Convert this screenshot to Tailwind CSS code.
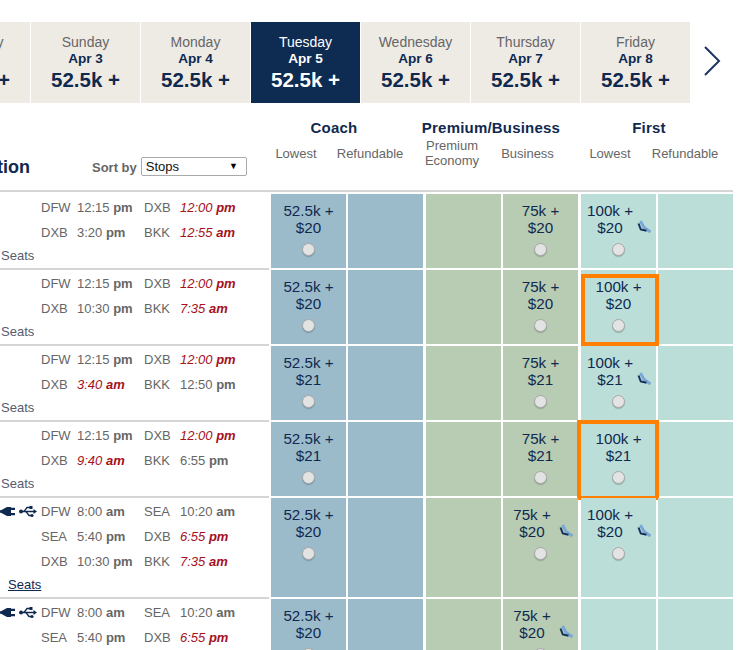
<!DOCTYPE html>
<html lang="en">
<head>
  <meta charset="UTF-8" />
  <title>Award Calendar</title>
  <script src="https://cdn.jsdelivr.net/npm/@tailwindcss/browser@4"></script>
</head>
<body class="bg-white overflow-hidden h-[650px] font-['Liberation_Sans',Arial,sans-serif] text-[#10294f]">

  <!-- date tabs -->
  <div class="flex items-start pt-[22px] ml-[-79px] gap-px" id="tabs"></div>

  <!-- column headers -->
  <div class="flex w-[733px] h-[89px] border-b-2 border-[#d5d5d5]">
    <div class="w-[271px] shrink-0 flex items-start">
      <span class="text-[18px] font-bold ml-[-4px] mt-[51px] w-[34px] shrink-0 overflow-hidden flex justify-end">tion</span>
      <span class="text-[13px] font-bold text-[#666] ml-[62px] mt-[55px] whitespace-nowrap">Sort by</span>
      <div class="ml-[4px] mt-[54px] w-[106px] shrink-0 h-[19px] border border-[#aaa] rounded-[2px] flex items-center justify-between pl-[4px] pr-[8px] text-[13px] text-[#111]">
        <span>Stops</span><span class="text-[9px] text-black">▼</span>
      </div>
    </div>
    <div class="flex-1 pt-[16px]">
      <div class="flex text-[15px] font-bold leading-[17px] text-center tracking-[0.2px]">
        <span class="w-[126px]">Coach</span>
        <span class="w-[188px]">Premium/Business</span>
        <span class="w-[128px]">First</span>
      </div>
      <div class="flex items-center h-[30px] mt-[2px] text-[13px] leading-[15px] text-[#666] text-center">
        <span class="w-[50px]">Lowest</span>
        <span class="w-[98px]">Refundable</span>
        <span class="w-[66px]">Premium Economy</span>
        <span class="w-[85px]">Business</span>
        <span class="w-[80px]">Lowest</span>
        <span class="w-[70px]">Refundable</span>
      </div>
    </div>
  </div>

  <!-- fare rows -->
  <div class="mt-[2px]" id="rows"></div>

  <script>
    const tabs = [
      ['Saturday', 'Apr 2'], ['Sunday', 'Apr 3'], ['Monday', 'Apr 4'], ['Tuesday', 'Apr 5'],
      ['Wednesday', 'Apr 6'], ['Thursday', 'Apr 7'], ['Friday', 'Apr 8']
    ]
    const seatIcon = `<svg class="absolute right-[4px] top-[26px]" width="15" height="14" viewBox="0 0 15 14"><path d="M3.5 1 L7 7.5 L13.5 12" fill="none" stroke="#7aa8d6" stroke-width="3"/><path d="M1.5 3.5 L3.8 9.5 L9.5 10.8" fill="none" stroke="#16305a" stroke-width="2"/></svg>`
    const plugIcons = `<svg class="absolute left-0 top-[6px]" width="37" height="13" viewBox="0 0 37 13"><path d="M0 5.2 H1 L7 2 H11 V11 H7 L1 7.8 H0 Z M11 2.8 H15 V5 H11 Z M11 8 H15 V10.2 H11 Z" fill="#10294f"/><path d="M20 6.5 H35" stroke="#10294f" stroke-width="1.5"/><circle cx="21" cy="6.5" r="2" fill="#10294f"/><path d="M33.5 4 L37 6.5 L33.5 9 Z" fill="#10294f"/><path d="M24 6.5 L27 2.5 H30 M26 6.5 L29 10.5 H31" stroke="#10294f" stroke-width="1.3" fill="none"/><rect x="29.5" y="1" width="3" height="3" fill="#10294f"/><circle cx="32" cy="10.5" r="1.6" fill="#10294f"/></svg>`

    const tabHtml = tabs.map(([day, date], i) => {
      const on = i === 3
      return `<div class="w-[109px] h-[81px] shrink-0 text-center pt-[12px] ${on ? 'bg-[#0e2b52] text-white' : 'bg-[#eeebe5] text-[#10294f]'}">
        <div class="text-[14px] leading-[17px] ${on ? 'text-white' : 'text-[#666]'}">${day}</div>
        <div class="text-[13.6px] leading-[16px] font-bold">${date}</div>
        <div class="text-[20.5px] leading-[25px] font-bold">52.5k +</div>
      </div>`
    }).join('')
    document.getElementById('tabs').innerHTML = tabHtml + `<svg class="ml-[13px] mt-[24px] shrink-0" width="17" height="30" viewBox="0 0 17 30"><path d="M1 1 L15 15 L1 29" fill="none" stroke="#1c3560" stroke-width="2"/></svg>`

    const t = (s, red) => {
      const [num, ap] = s.split(' ')
      return red
        ? `<span class="italic text-[#a5101c]">${num} <b>${ap}</b></span>`
        : `<span>${num} <b>${ap}</b></span>`
    }
    const A = ['DFW', '12:15 pm', 0, 'DXB', '12:00 pm', 1]
    const B = ['DFW', '8:00 am', 0, 'SEA', '10:20 am', 0]
    const C = ['SEA', '5:40 pm', 0, 'DXB', '6:55 pm', 1]
    const D = ['DXB', '10:30 pm', 0, 'BKK', '7:35 am', 1]

    const rows = [
      { h: 74, legs: [A, ['DXB', '3:20 pm', 0, 'BKK', '12:55 am', 1]], fee: '$20', fSeat: 1, box: 0 },
      { h: 74, legs: [A, D], fee: '$20', box: 1 },
      { h: 74, legs: [A, ['DXB', '3:40 am', 1, 'BKK', '12:50 pm', 0]], fee: '$21', fSeat: 1, box: 0 },
      { h: 74, legs: [A, ['DXB', '9:40 am', 1, 'BKK', '6:55 pm', 0]], fee: '$21', box: 2 },
      { h: 99, legs: [B, C, D], fee: '$20', bSeat: 1, fSeat: 1, link: 1, icons: 1 },
      { h: 99, legs: [B, C, D], fee: '$20', bSeat: 1, noFirst: 1, icons: 1 },
    ]

    const fare = (pts, fee, seat) => `<div class="relative pt-[8px] text-[15.2px] leading-[17px] text-center">
        <div class="${seat ? 'pr-[17px]' : ''}"><div>${pts} +</div><div>${fee}</div></div>
        <div class="mx-auto mt-[7px] w-[13px] h-[13px] rounded-full bg-[#e3e3e3] border border-[#a8a8a8] shadow-[0_1px_1px_rgba(0,0,0,0.2)]"></div>
        ${seat ? seatIcon : ''}
      </div>`

    document.getElementById('rows').innerHTML = rows.map((r, i) => {
      const legs = r.legs.map((l, j) => `<div class="grid grid-cols-[41px_36px_67px_36px_1fr] text-[13px] leading-[25px] text-[#666] whitespace-nowrap">
          <div class="relative">${j === 0 && r.icons ? plugIcons : ''}</div>
          <span>${l[0]}</span>${t(l[1], l[2])}<span>${l[3]}</span>${t(l[4], l[5])}
        </div>`).join('')
      const seats = r.link
        ? `<a class="block pl-[8px] mt-px text-[13px] leading-[20px] underline text-[#10294f]">Seats</a>`
        : `<div class="pl-[1px] mt-px text-[13px] leading-[20px] text-[#555c70]">Seats</div>`
      const boxClass = r.box === 1
        ? 'absolute left-[581px] top-[4px] w-[78px] h-[72px] border-4 border-[#ff8000]'
        : 'absolute left-[577px] top-[-2px] w-[82px] h-[80px] border-4 border-[#ff8000]'
      return `<div class="relative flex items-start" style="height:${r.h + 2}px">
        <div class="w-[269px] mr-[2px] border-b-2 border-[#d5d5d5] pt-px overflow-hidden" style="height:${r.h + 2}px">${legs}${seats}</div>
        <div class="w-[75px] bg-[#9bbbcb]" style="height:${r.h}px">${fare('52.5k', r.fee)}</div>
        <div class="w-[75px] ml-[2px] bg-[#9bbbcb]" style="height:${r.h}px"></div>
        <div class="w-[75px] ml-[3px] bg-[#b7ccb3]" style="height:${r.h}px"></div>
        <div class="w-[75px] ml-[2px] bg-[#b7ccb3]" style="height:${r.h}px">${fare('75k', r.fee, r.bSeat)}</div>
        <div class="w-[75px] ml-[3px] bg-[#bbded8]" style="height:${r.h}px">${r.noFirst ? '' : fare('100k', r.fee, r.fSeat)}</div>
        <div class="w-[75px] ml-[2px] bg-[#bbded8]" style="height:${r.h}px"></div>
        ${r.box ? `<div class="${boxClass}"></div>` : ''}
      </div>`
    }).join('')
  </script>
</body>
</html>
